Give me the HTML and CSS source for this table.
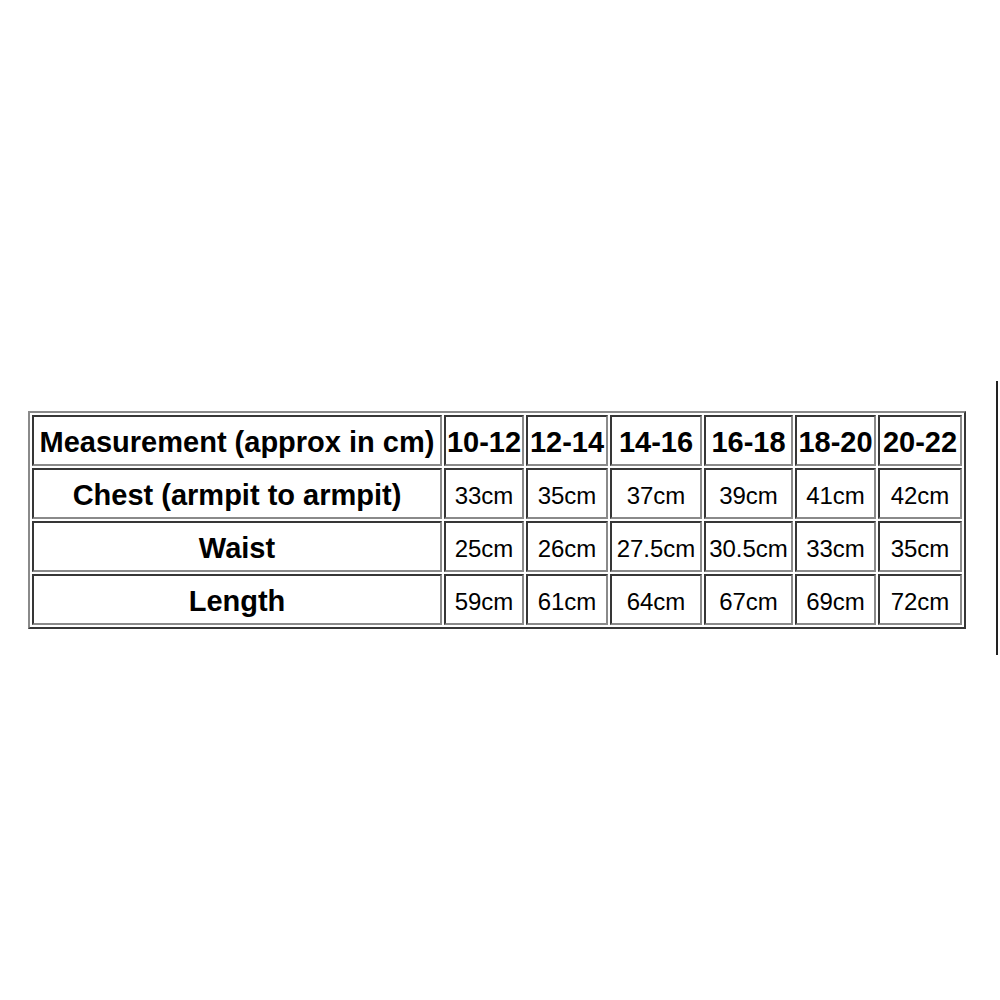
FILE: index.html
```html
<!DOCTYPE html>
<html>
<head>
<meta charset="utf-8">
<link rel="stylesheet" href="styles.css">
</head>
<body>
<div class="page">
  <table class="sizes">
    <colgroup>
      <col class="c-label">
      <col class="c-a">
      <col class="c-b">
      <col class="c-c">
      <col class="c-d">
      <col class="c-e">
      <col class="c-f">
    </colgroup>
    <tr class="head">
      <td>Measurement (approx in cm)</td>
      <td>10-12</td>
      <td>12-14</td>
      <td>14-16</td>
      <td>16-18</td>
      <td>18-20</td>
      <td>20-22</td>
    </tr>
    <tr>
      <td class="label">Chest (armpit to armpit)</td>
      <td>33cm</td>
      <td>35cm</td>
      <td>37cm</td>
      <td>39cm</td>
      <td>41cm</td>
      <td>42cm</td>
    </tr>
    <tr>
      <td class="label">Waist</td>
      <td>25cm</td>
      <td>26cm</td>
      <td>27.5cm</td>
      <td>30.5cm</td>
      <td>33cm</td>
      <td>35cm</td>
    </tr>
    <tr>
      <td class="label">Length</td>
      <td>59cm</td>
      <td>61cm</td>
      <td>64cm</td>
      <td>67cm</td>
      <td>69cm</td>
      <td>72cm</td>
    </tr>
  </table>
  <div class="edge"></div>
</div>
</body>
</html>
```

FILE: styles.css
```css
html, body {
  margin: 0;
  padding: 0;
  background: #ffffff;
}

.page {
  display: flex;
  align-items: flex-start;
  padding-top: 381px;
  padding-left: 28px;
  width: 1000px;
  box-sizing: border-box;
}

.sizes {
  margin-top: 30px;
  width: 938px;
  table-layout: fixed;
  border-collapse: separate;
  border-spacing: 2px;
  border: 2px outset #8a8a8a;
  font-family: "Liberation Sans", Arial, sans-serif;
  color: #000;
}

.c-label { width: 410px; }
.c-a { width: 80px; }
.c-b { width: 82px; }
.c-c { width: 92px; }
.c-d { width: 89px; }
.c-e { width: 81px; }
.c-f { width: 84px; }

.sizes td {
  border: 2px inset #8a8a8a;
  height: 43px;
  padding: 4px 0 0 0;
  text-align: center;
  font-size: 24px;
  white-space: nowrap;
  overflow: hidden;
}

.sizes .head td,
.sizes td.label {
  font-weight: bold;
  font-size: 29px;
}

.edge {
  margin-left: auto;
  margin-right: 2px;
  width: 2px;
  height: 274px;
  background: #222;
}
```
